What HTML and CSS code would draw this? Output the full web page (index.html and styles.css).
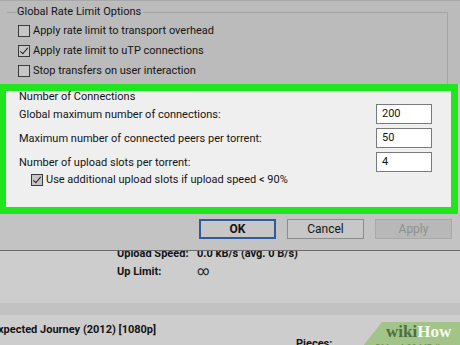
FILE: index.html
```html
<!DOCTYPE html>
<html lang="en">
<head>
<meta charset="UTF-8">
<title>Preferences - Bandwidth</title>
<link rel="stylesheet" href="styles.css">
</head>
<body>
    <div class="screen">
        <div class="dialog-top">
            <fieldset class="group">
                <legend>Global Rate Limit Options</legend>
                <label class="check"><span class="box"></span>Apply rate limit to transport overhead</label>
                <label class="check"><span class="box checked"></span>Apply rate limit to uTP connections</label>
                <label class="check"><span class="box"></span>Stop transfers on user interaction</label>
            </fieldset>
        </div>

        <div class="highlight">
            <div class="panel">
                <div class="panel-title">Number of Connections</div>
                <div class="row">
                    <span>Global maximum number of connections:</span>
                    <span class="field">200</span>
                </div>
                <div class="row">
                    <span>Maximum number of connected peers per torrent:</span>
                    <span class="field">50</span>
                </div>
                <div class="row">
                    <span>Number of upload slots per torrent:</span>
                    <span class="field">4</span>
                </div>
                <label class="check indent"><span class="box checked"></span>Use additional upload slots if upload speed &lt; 90%</label>
            </div>
        </div>

        <div class="buttons">
            <button class="btn default">OK</button>
            <button class="btn">Cancel</button>
            <button class="btn disabled">Apply</button>
        </div>

        <div class="status">
            <div class="stat"><span class="key">Upload Speed:</span><span>0.0 kB/s (avg. 0 B/s)</span></div>
            <div class="stat"><span class="key">Up Limit:</span><span class="inf">&infin;</span></div>
            <div class="band"></div>
            <div class="torrent">
                <span class="name">xpected Journey (2012) [1080p]</span>
                <span class="pieces">Pieces:</span>
            </div>
            <div class="wiki">
                <div class="wiki-text">wiki<b>How</b></div>
                <div class="wiki-sub">511 x 4.00 MB (have 0)</div>
            </div>
        </div>
    </div>
</body>
</html>
```

FILE: styles.css
```css
body {
    margin: 0;
    font-family: Roboto, 'Open Sans', sans-serif;
    font-size: 11px;
    color: #141414;
}
.screen {
    width: 460px;
    height: 345px;
    overflow: hidden;
    background: #c9c9c9;
}
.dialog-top {
    height: 84px;
    background: #bbbbbb;
    border-top: 1px solid #a8a8a8;
    box-sizing: border-box;
}
.group {
    margin: 3px 12px 0 7px;
    padding: 1px 0 0 11px;
    height: 80px;
    box-sizing: border-box;
    border: 1px solid #a4a4a4;
    border-left: none;
    border-bottom: none;
}
.group legend {
    padding: 0 2px 0 0;
    margin-left: -1px;
    line-height: 16px;
}
.check {
    display: flex;
    align-items: center;
    height: 20px;
    line-height: 20px;
}
.box {
    width: 10px;
    height: 10px;
    border: 1px solid #3a3a3a;
    background: #c6c6c6;
    margin-right: 3px;
    position: relative;
}
.box.checked::after {
    content: "";
    position: absolute;
    left: 3px;
    top: 0;
    width: 3px;
    height: 7px;
    border: solid #222;
    border-width: 0 1.5px 1.5px 0;
    transform: rotate(40deg);
}
.highlight {
    width: 458px;
    height: 130px;
    box-sizing: border-box;
    border: 7px solid #1fe61f;
    border-left-width: 6px;
}
.panel {
    height: 100%;
    background: #efefef;
    padding: 0 19px 0 13px;
    box-sizing: border-box;
}
.panel-title {
    line-height: 11px;
}
.row {
    display: flex;
    justify-content: space-between;
    align-items: center;
    height: 24px;
}
.field {
    border: 1px solid #7a7a7a;
    background: #fff;
    padding-left: 5px;
    box-sizing: border-box;
    width: 56px;
    height: 20px;
    line-height: 18px;
}
.indent {
    padding-left: 12px;
    height: 18px;
    margin-top: -3px;
}
.buttons {
    height: 37px;
    background: #c3c3c3;
    display: flex;
    justify-content: flex-end;
    align-items: flex-start;
    gap: 11px;
    padding: 5px 8px 0 0;
    box-sizing: border-box;
    border-bottom: 1px solid #6a6a6a;
}
.btn {
    width: 77px;
    height: 20px;
    font-family: inherit;
    font-size: 12px;
    color: #141414;
    background: #c7c7c7;
    border: 1px solid #8c8c8c;
    padding: 0;
}
.btn.default {
    border: 2px solid #2d5b9c;
    font-weight: bold;
}
.btn.disabled {
    background: #b8b8b8;
    color: #8e8e8e;
    border-color: #a8a8a8;
}
.status {
    position: relative;
    height: 94px;
    background: #cdcdcd;
    font-weight: bold;
    overflow: hidden;
}
.stat {
    display: flex;
    padding-left: 117px;
    height: 17px;
    line-height: 17px;
    margin-top: -6px;
}
.stat + .stat {
    margin-top: 1px;
}
.key {
    width: 80px;
    flex-shrink: 0;
}
.inf {
    font-weight: normal;
    font-size: 12px;
}
.band {
    height: 12px;
    background: #c2c2c2;
    margin-top: 23px;
}
.torrent {
    position: relative;
    line-height: 14px;
    margin-top: 8px;
    margin-left: -2px;
}
.pieces {
    position: absolute;
    left: 298px;
    top: 14px;
}
.wiki {
    position: absolute;
    left: 363px;
    top: 71px;
    width: 100px;
    height: 24px;
    background: #a3c488;
    clip-path: polygon(19px 0, 100% 0, 100% 100%, 0 100%);
}
.wiki-text {
    font-family: 'Liberation Serif', serif;
    font-size: 17px;
    font-weight: bold;
    color: #4d6e40;
    padding: 2px 0 0 23px;
    line-height: 16px;
    height: 18px;
}
.wiki-sub {
    font-size: 9px;
    font-weight: normal;
    color: #6f8c5e;
    padding-left: 12px;
    line-height: 9px;
    margin-top: 2px;
}
.wiki-text b {
    color: #f4f8ef;
}
```
